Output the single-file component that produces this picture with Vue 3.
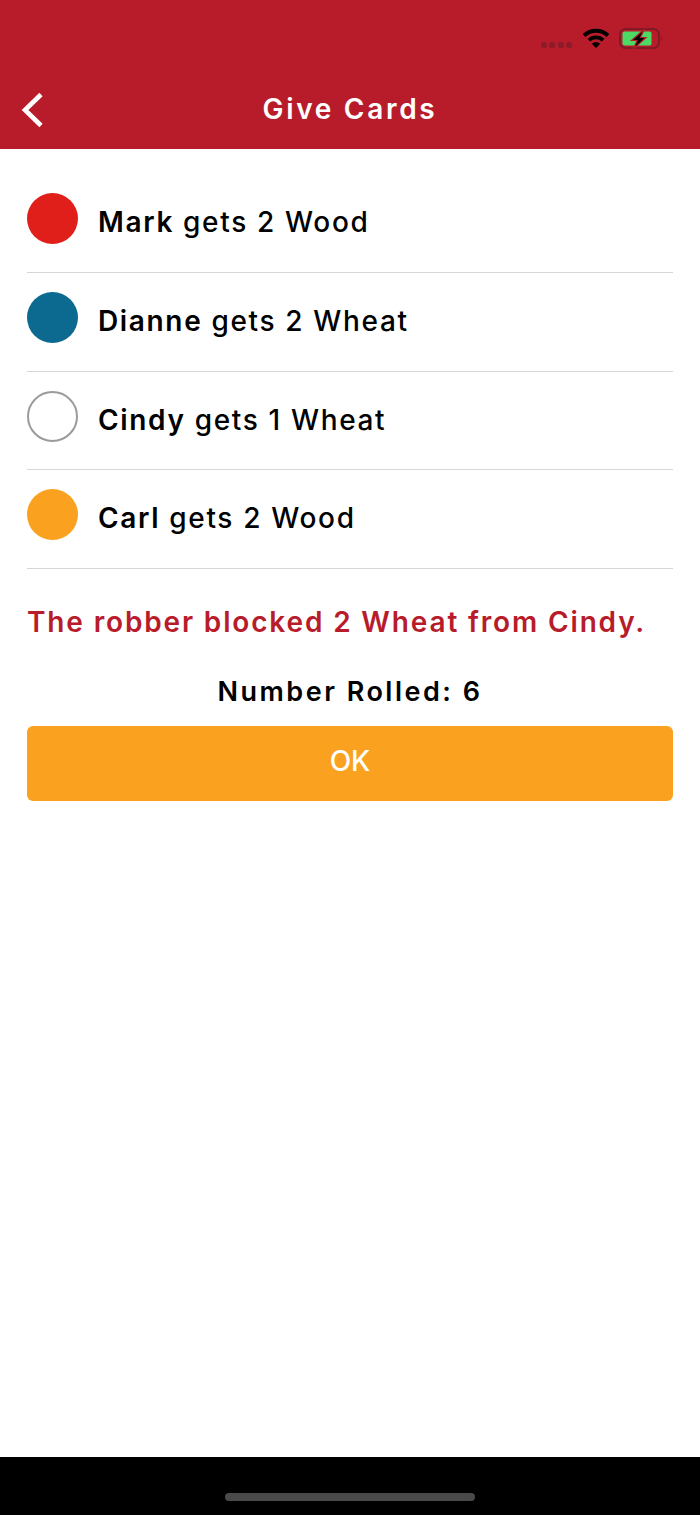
<script setup>
const rows = [
  { name: 'Mark', rest: ' gets 2 Wood', cls: 'red' },
  { name: 'Dianne', rest: ' gets 2 Wheat', cls: 'blue' },
  { name: 'Cindy', rest: ' gets 1 Wheat', cls: 'white' },
  { name: 'Carl', rest: ' gets 2 Wood', cls: 'orange' },
]
</script>

<template>
  <div class="page">
    <header class="header">
      <div class="status">
        <div class="dots"><i></i><i></i><i></i><i></i></div>
        <svg class="wifi" width="28" height="22" viewBox="0 0 28 22">
          <path d="M2 8.5 A17.5 17.5 0 0 1 26 8.5" fill="none" stroke="#000" stroke-width="3.8"/>
          <path d="M6.8 13.2 A10.5 10.5 0 0 1 21.2 13.2" fill="none" stroke="#000" stroke-width="3.8"/>
          <path d="M14 21 L9.8 16.7 A6 6 0 0 1 18.2 16.7 Z" fill="#000"/>
        </svg>
        <svg class="battery" width="46" height="22" viewBox="0 0 46 22">
          <rect x="2" y="2" width="39" height="19" rx="5.5" fill="none" stroke="#7f1a26" stroke-width="2"/>
          <rect x="4.5" y="4.5" width="29" height="14" rx="2" fill="#4cd964"/>
          <path d="M43 8.5 Q45.5 11.5 43 14.5 Z" fill="#7f1a26"/>
          <path d="M26.5 2 L13.5 13.5 H19 L15.5 22 L28 10.5 H22.5 Z" fill="#000" stroke="#b81c2b" stroke-width="1.2"/>
        </svg>
      </div>
      <div class="nav">
        <svg class="back" width="24" height="36" viewBox="0 0 24 36">
          <path d="M21 2.5 L5 18 L21 33.5" fill="none" stroke="#fff" stroke-width="4.6"/>
        </svg>
        <h1 class="title">Give Cards</h1>
      </div>
    </header>
    <main class="content">
      <ul class="list">
        <li v-for="r in rows" :key="r.name" class="row">
          <span class="dot" :class="r.cls"></span>
          <span class="label"><b>{{ r.name }}</b>{{ r.rest }}</span>
        </li>
      </ul>
      <p class="blocked">The robber blocked 2 Wheat from Cindy.</p>
      <p class="rolled">Number Rolled: 6</p>
      <button class="ok">OK</button>
    </main>
    <footer class="home"><span class="bar"></span></footer>
  </div>
</template>

<style>
html, body { margin: 0; padding: 0; background: #fff; }
</style>

<style scoped>
.page {
  width: 700px;
  height: 1515px;
  display: flex;
  flex-direction: column;
  font-family: Inter, "Liberation Sans", sans-serif;
  background: #fff;
  color: #000;
}
.header { height: 149px; background: #b81c2b; display: flex; flex-direction: column; }
.status { height: 78px; display: flex; align-items: flex-start; justify-content: flex-end; padding: 27px 36px 0 0; box-sizing: border-box; }
.dots { display: flex; gap: 2.3px; margin: 15px 10px 0 0; }
.dots i { width: 6px; height: 6px; border-radius: 2px; background: #8f1a28; }
.wifi { margin-right: 8px; }
.nav { position: relative; flex: 1; display: flex; align-items: center; justify-content: center; padding-bottom: 9px; box-sizing: border-box; }
.back { position: absolute; left: 20px; top: 14px; }
.title { margin: 0; font-size: 28px; font-weight: 600; color: #fff; letter-spacing: 2.7px; line-height: 36px; }
.content { flex: 1; padding: 25.2px 27px 0; display: flex; flex-direction: column; }
.list { list-style: none; margin: 0; padding: 0; }
.row { height: 98.67px; display: flex; align-items: flex-start; gap: 20px; border-bottom: 1px solid #d6d6d6; box-sizing: border-box; padding-top: 19px; }
.dot { width: 51px; height: 51px; border-radius: 50%; box-sizing: border-box; flex: none; }
.red { background: #e01f1b; }
.blue { background: #0c6a90; }
.white { background: #fff; border: 2px solid #9b9b9b; }
.orange { background: #faa21f; }
.label { font-size: 28px; font-weight: 500; letter-spacing: 1.65px; line-height: 36px; white-space: pre; margin-top: 11px; }
.label b { font-weight: 600; }
.blocked { margin: 35px 0 0; font-size: 28px; font-weight: 600; color: #b81c2b; letter-spacing: 1.85px; line-height: 36px; white-space: nowrap; }
.rolled { margin: 35.2px 0 0; font-size: 27px; font-weight: 600; text-align: center; letter-spacing: 2.5px; line-height: 34px; }
.ok { margin-top: 17px; height: 75px; border: 0; border-radius: 6px; background: #faa21f; color: #fff; font: 500 28px Inter, "Liberation Sans", sans-serif; padding: 0 0 6px; width: 100%; }
.home { height: 58px; background: #000; position: relative; flex: none; }
.bar { position: absolute; left: 225px; top: 36px; width: 250px; height: 8px; border-radius: 4px; background: #4a4a4a; }
</style>
